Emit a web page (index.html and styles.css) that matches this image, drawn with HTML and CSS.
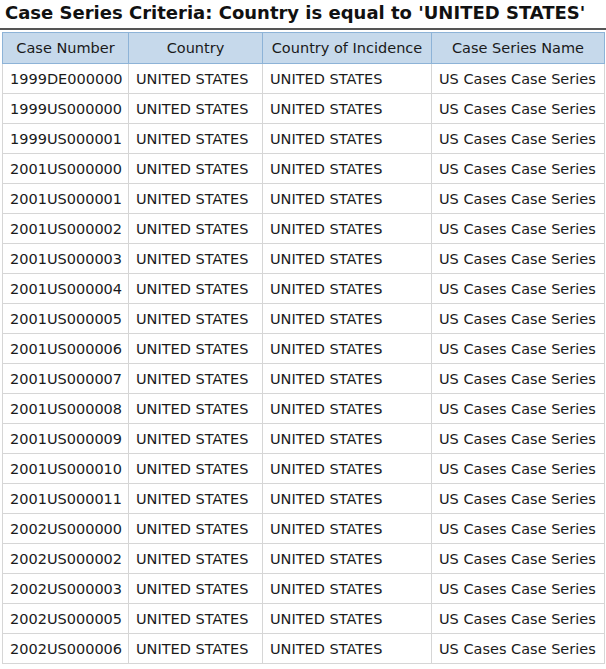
FILE: index.html
```html
<!DOCTYPE html>
<html>
<head>
<meta charset="utf-8">
<link rel="stylesheet" href="styles.css">
</head>
<body>
<div class="page">
  <h1 class="title">Case Series Criteria: Country is equal to 'UNITED STATES'</h1>
  <table class="grid">
    <colgroup>
      <col class="c1"><col class="c2"><col class="c3"><col class="c4">
    </colgroup>
    <thead>
      <tr><th>Case Number</th><th>Country</th><th>Country of Incidence</th><th>Case Series Name</th></tr>
    </thead>
    <tbody>
      <tr><td>1999DE000000</td><td>UNITED STATES</td><td>UNITED STATES</td><td>US Cases Case Series</td></tr>
      <tr><td>1999US000000</td><td>UNITED STATES</td><td>UNITED STATES</td><td>US Cases Case Series</td></tr>
      <tr><td>1999US000001</td><td>UNITED STATES</td><td>UNITED STATES</td><td>US Cases Case Series</td></tr>
      <tr><td>2001US000000</td><td>UNITED STATES</td><td>UNITED STATES</td><td>US Cases Case Series</td></tr>
      <tr><td>2001US000001</td><td>UNITED STATES</td><td>UNITED STATES</td><td>US Cases Case Series</td></tr>
      <tr><td>2001US000002</td><td>UNITED STATES</td><td>UNITED STATES</td><td>US Cases Case Series</td></tr>
      <tr><td>2001US000003</td><td>UNITED STATES</td><td>UNITED STATES</td><td>US Cases Case Series</td></tr>
      <tr><td>2001US000004</td><td>UNITED STATES</td><td>UNITED STATES</td><td>US Cases Case Series</td></tr>
      <tr><td>2001US000005</td><td>UNITED STATES</td><td>UNITED STATES</td><td>US Cases Case Series</td></tr>
      <tr><td>2001US000006</td><td>UNITED STATES</td><td>UNITED STATES</td><td>US Cases Case Series</td></tr>
      <tr><td>2001US000007</td><td>UNITED STATES</td><td>UNITED STATES</td><td>US Cases Case Series</td></tr>
      <tr><td>2001US000008</td><td>UNITED STATES</td><td>UNITED STATES</td><td>US Cases Case Series</td></tr>
      <tr><td>2001US000009</td><td>UNITED STATES</td><td>UNITED STATES</td><td>US Cases Case Series</td></tr>
      <tr><td>2001US000010</td><td>UNITED STATES</td><td>UNITED STATES</td><td>US Cases Case Series</td></tr>
      <tr><td>2001US000011</td><td>UNITED STATES</td><td>UNITED STATES</td><td>US Cases Case Series</td></tr>
      <tr><td>2002US000000</td><td>UNITED STATES</td><td>UNITED STATES</td><td>US Cases Case Series</td></tr>
      <tr><td>2002US000002</td><td>UNITED STATES</td><td>UNITED STATES</td><td>US Cases Case Series</td></tr>
      <tr><td>2002US000003</td><td>UNITED STATES</td><td>UNITED STATES</td><td>US Cases Case Series</td></tr>
      <tr><td>2002US000005</td><td>UNITED STATES</td><td>UNITED STATES</td><td>US Cases Case Series</td></tr>
      <tr><td>2002US000006</td><td>UNITED STATES</td><td>UNITED STATES</td><td>US Cases Case Series</td></tr>
    </tbody>
  </table>
</div>
</body>
</html>
```
FILE: styles.css
```css
html, body {
  margin: 0;
  padding: 0;
  background: #ffffff;
}
.page {
  width: 606px;
  font-family: "DejaVu Sans", sans-serif;
  color: #1a1a1a;
}
.title {
  margin: 0;
  padding: 3px 0 0 5px;
  height: 30px;
  font-size: 18px;
  font-weight: bold;
  line-height: 20px;
  color: #111;
  border-bottom: 2px solid #555;
  box-sizing: border-box;
  white-space: nowrap;
}
.grid {
  margin: 2px 0 0 2px;
  border-collapse: collapse;
  table-layout: fixed;
  width: 602px;
}
.c1 { width: 126px; }
.c2 { width: 134px; }
.c3 { width: 169px; }
.c4 { width: 173px; }
.grid th {
  height: 31px;
  padding: 0;
  background: #c6d9eb;
  border: 1px solid #8db3d7;
  font-weight: normal;
  font-size: 14.5px;
  text-align: center;
  color: #1a1a1a;
  box-sizing: border-box;
}
.grid td {
  height: 30px;
  padding: 0 0 0 7px;
  border: 1px solid #d6d6d6;
  font-size: 14.5px;
  text-align: left;
  white-space: nowrap;
  overflow: hidden;
  color: #1a1a1a;
  box-sizing: border-box;
}
```
